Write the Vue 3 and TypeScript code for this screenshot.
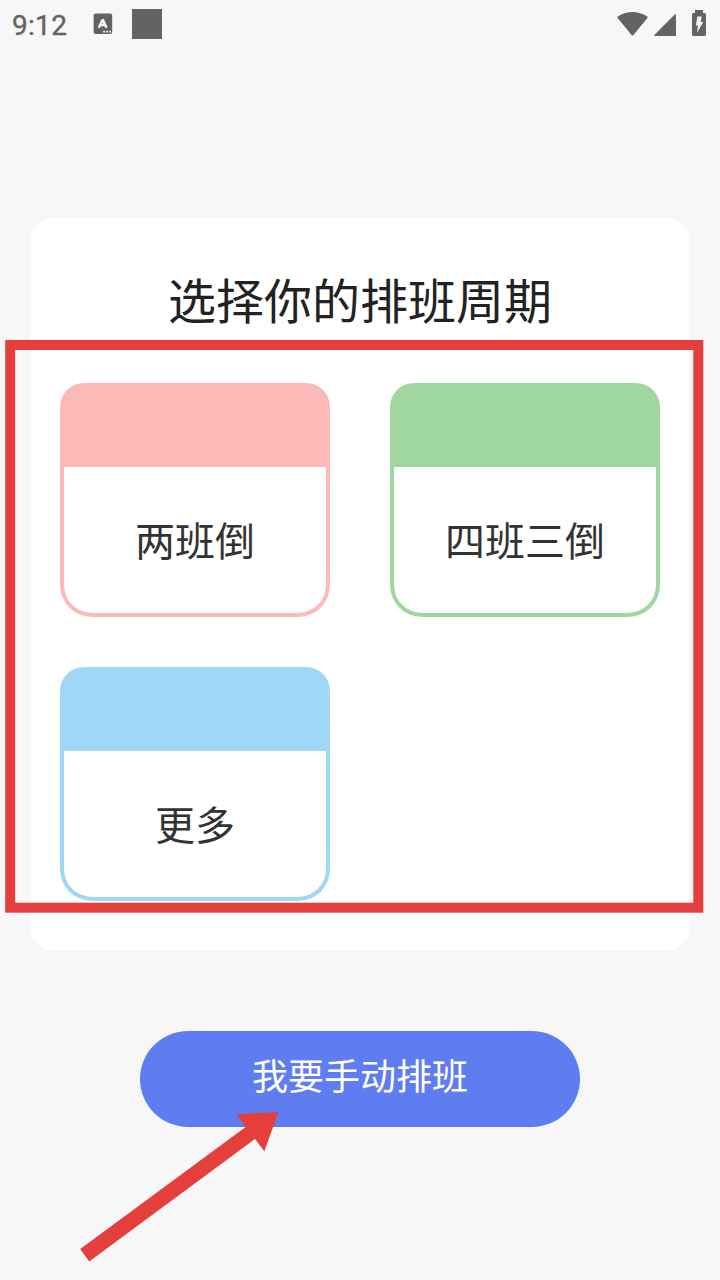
<template>
  <div class="page">
    <header class="status-bar">
      <span class="time">9:12</span>
      <svg class="icon-input" viewBox="0 0 20 22">
        <rect x="0.6" y="0.5" width="18.6" height="20.6" rx="2" fill="#636363" />
        <path d="M5.8 14.8L9.7 6.4L13.6 14.8M7.4 12H12" fill="none" stroke="#f7f7f7" stroke-width="2.4" stroke-linejoin="bevel" />
        <path d="M10.2 17.8h1.8v1.8h-1.8zM13.2 17.8h1.8v1.8h-1.8zM16.2 17.8h1.8v1.8h-1.8z" fill="#f7f7f7" />
      </svg>
      <span class="square"></span>
      <div class="status-right">
        <svg class="icon-wifi" viewBox="0 0 32 24" preserveAspectRatio="none">
          <path d="M0.8 4.6Q0 5.2 0.8 6.2L15 23Q16 24.2 17 23L31.2 6.2Q32 5.2 31.2 4.6C22.5 -1.4 9.5 -1.4 0.8 4.6Z" />
        </svg>
        <svg class="icon-signal" viewBox="0 0 22 22">
          <path d="M22 1.2V21Q22 22 21 22H1.2Q-0.6 22 0.6 20.7L20.7 0.6Q22 -0.5 22 1.2Z" />
        </svg>
        <svg class="icon-battery" viewBox="0 0 14 26">
          <path d="M3 0H11V3H12.5Q14 3 14 4.5V24.5Q14 26 12.5 26H1.5Q0 26 0 24.5V4.5Q0 3 1.5 3H3Z" />
          <path class="bolt" d="M5.4 6.5H9.8L8.6 12H11.2L5 23L6 15.4H3.8Z" />
        </svg>
      </div>
    </header>

    <main class="panel">
      <h1 class="title">选择你的排班周期</h1>
      <div class="grid">
        <div v-for="item in cycles" :key="item.label" class="cycle" :class="`cycle-${item.type}`">
          <div class="cycle-label">{{ item.label }}</div>
        </div>
      </div>
    </main>

    <button class="manual-btn" type="button">我要手动排班</button>

    <svg class="marks" viewBox="0 0 720 1280">
      <rect x="10.2" y="345" width="688.1" height="562.7" class="frame" />
      <polygon points="80.2,1249 245.7,1127 236.5,1114.2 278.6,1112 264.3,1151.3 255,1139 89.2,1261.5" />
    </svg>
  </div>
</template>

<script setup lang="ts">
interface Cycle {
  label: string
  type: 'pink' | 'green' | 'blue'
}

const cycles: Cycle[] = [
  { label: '两班倒', type: 'pink' },
  { label: '四班三倒', type: 'green' },
  { label: '更多', type: 'blue' }
]
</script>

<style>
body {
  margin: 0;
  background: #f7f7f7;
}
</style>

<style scoped>
.page {
  position: relative;
  width: 720px;
  height: 1280px;
  overflow: hidden;
  background: #f7f7f7;
  font-family: "Noto Sans CJK SC", sans-serif;
}

.status-bar {
  display: flex;
  align-items: center;
  height: 48px;
  padding: 0 14px 0 12px;
  box-sizing: border-box;
  fill: #636363;
}

.time {
  width: 81px;
  padding-top: 4px;
  font-family: Roboto, sans-serif;
  font-size: 28px;
  font-weight: 400;
  line-height: 34px;
  letter-spacing: 0.3px;
  color: #636363;
  -webkit-text-stroke: 0.4px #636363;
}

.icon-input {
  width: 20px;
  height: 22px;
}

.square {
  width: 30px;
  height: 30px;
  margin-left: 19px;
  background: #636363;
}

.status-right {
  display: flex;
  align-items: flex-end;
  height: 26px;
  margin-left: auto;
  margin-top: -2px;
}

.icon-wifi {
  width: 31px;
  height: 24px;
}

.icon-signal {
  width: 22px;
  height: 22px;
  margin-left: 6px;
}

.icon-battery {
  width: 14px;
  height: 26px;
  margin-left: 16px;
}

.bolt {
  fill: #f7f7f7;
}

.panel {
  height: 733px;
  margin: 170px 30px 0;
  padding: 45px 30px 0;
  box-sizing: border-box;
  border-radius: 24px;
  background: #fff;
}

.title {
  margin: 0 0 50px;
  font-size: 48px;
  font-weight: 400;
  line-height: 70px;
  text-align: center;
  color: #222;
}

.grid {
  display: grid;
  grid-template-columns: 270px 270px;
  gap: 50px 60px;
}

.cycle {
  height: 234px;
  padding: 84px 4px 4px;
  box-sizing: border-box;
  border-radius: 24px 24px 32px 32px;
}

.cycle-pink {
  background: #fbb9b8;
}

.cycle-green {
  background: #a0d7a0;
}

.cycle-blue {
  background: #9fd8f6;
}

.cycle-label {
  height: 146px;
  border-radius: 0 0 28px 28px;
  background: #fff;
  font-size: 40px;
  line-height: 144px;
  text-align: center;
  color: #333;
}

.manual-btn {
  display: block;
  width: 440px;
  height: 96px;
  margin: 80px auto 0;
  padding: 0 0 10px;
  border: none;
  border-radius: 48px;
  background: #5f7df1;
  font-family: inherit;
  font-size: 36px;
  line-height: 86px;
  color: #fff;
}

.marks {
  position: absolute;
  top: 0;
  left: 0;
  width: 720px;
  height: 1280px;
  fill: #e43e3d;
  pointer-events: none;
}

.frame {
  fill: none;
  stroke: #e43e3d;
  stroke-width: 10;
}
</style>
